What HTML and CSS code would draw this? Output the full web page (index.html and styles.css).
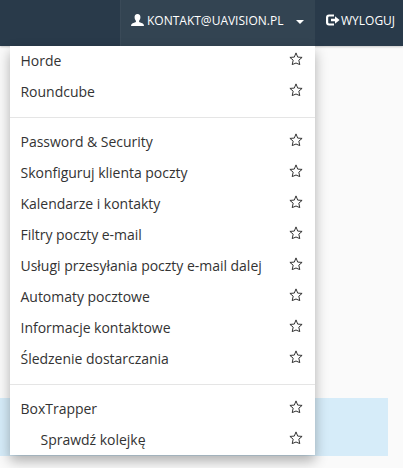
FILE: index.html
```html
<!DOCTYPE html>
<html lang="pl">
<head>
    <meta charset="UTF-8">
    <meta name="viewport" content="width=device-width, initial-scale=1.0">
    <title>Webmail</title>
    <link rel="stylesheet" href="styles.css">
</head>
<body>
    <svg class="hidden">
        <symbol id="star" viewBox="0 0 14 14">
            <path d="M7 0.9L8.7 5.1L13.1 5.4L9.8 8.2L10.8 12.6L7 11L3.2 12.6L4.2 8.2L0.9 5.4L5.3 5.1Z" fill="none" stroke="currentColor" stroke-width="1"/>
        </symbol>
    </svg>

    <header class="navbar">
        <a class="user">
            <svg class="user-icon" viewBox="0 0 13 12"><path d="M6.5 0C8.5 0 9.6 1.4 9.4 3.5C9.3 5.2 8.6 6.2 8.1 6.8V8L11.8 9.6Q13 10.2 13 12H0Q0 10.2 1.2 9.6L4.9 8V6.8C4.4 6.2 3.7 5.2 3.6 3.5C3.4 1.4 4.5 0 6.5 0Z"/></svg>
            <span class="user-name">KONTAKT@UAVISION.PL</span>
            <span class="caret"></span>
        </a>
        <a class="logout">
            <svg class="logout-icon" viewBox="0 0 14 12"><path d="M8 0.5V2.5H3.2Q2.2 2.5 2.2 3.5V8.5Q2.2 9.5 3.2 9.5H8V11.5H3Q0 11.5 0 8.5V3.5Q0 0.5 3 0.5Z"/><path d="M9 2.2L13.6 6L9 9.8V7.3H5V4.7H9Z"/></svg>
            <span class="logout-text">WYLOGUJ</span>
        </a>
    </header>

    <main class="content">
        <div class="notice"></div>
        <ul class="menu">
            <li><a>Horde</a><svg class="star"><use href="#star"/></svg></li>
            <li><a>Roundcube</a><svg class="star"><use href="#star"/></svg></li>
            <li class="divider"></li>
            <li><a>Password &amp; Security</a><svg class="star"><use href="#star"/></svg></li>
            <li><a>Skonfiguruj klienta poczty</a><svg class="star"><use href="#star"/></svg></li>
            <li><a>Kalendarze i kontakty</a><svg class="star"><use href="#star"/></svg></li>
            <li><a>Filtry poczty e-mail</a><svg class="star"><use href="#star"/></svg></li>
            <li><a>Usługi przesyłania poczty e-mail dalej</a><svg class="star"><use href="#star"/></svg></li>
            <li><a>Automaty pocztowe</a><svg class="star"><use href="#star"/></svg></li>
            <li><a>Informacje kontaktowe</a><svg class="star"><use href="#star"/></svg></li>
            <li><a>Śledzenie dostarczania</a><svg class="star"><use href="#star"/></svg></li>
            <li class="divider"></li>
            <li><a>BoxTrapper</a><svg class="star"><use href="#star"/></svg></li>
            <li class="sub"><a>Sprawdź kolejkę</a><svg class="star"><use href="#star"/></svg></li>
        </ul>
    </main>
</body>
</html>
```

FILE: styles.css
```css
* {
    box-sizing: border-box;
}
body {
    margin: 0;
    height: 468px;
    overflow: hidden;
    background: #fafafa;
    color: #333;
    font-family: "Open Sans", sans-serif;
    font-size: 14px;
}
.hidden {
    display: none;
}
.navbar {
    display: flex;
    justify-content: flex-end;
    height: 46px;
    background: #293a4a;
    color: #fff;
    font-size: 12px;
    line-height: 42px;
    box-shadow: 0 1px 2px rgba(0, 0, 0, 0.2);
}
.navbar svg {
    fill: #fff;
}
.user {
    display: flex;
    width: 195px;
    padding-left: 10px;
    background: #334452;
    border-left: 1px solid #3a4a58;
}
.user-icon {
    width: 13px;
    height: 12px;
    margin: 14px 3px 0 0;
}
.caret {
    width: 0;
    height: 0;
    margin: 20px 0 0 13px;
    border-top: 4px solid #fff;
    border-left: 4px solid transparent;
    border-right: 4px solid transparent;
}
.logout {
    display: flex;
    width: 88px;
    padding-left: 11px;
}
.logout-icon {
    width: 14px;
    height: 12px;
    margin: 14px 1px 0 0;
}
.content {
    position: relative;
    height: 422px;
    padding-top: 352px;
}
.notice {
    width: 388px;
    height: 58px;
    background: #d6ecf9;
}
.menu {
    position: absolute;
    top: 0;
    left: 10px;
    width: 305px;
    height: 409px;
    margin: 0;
    padding: 0;
    list-style: none;
    background: #fff;
    box-shadow: 0 6px 12px rgba(0, 0, 0, 0.3);
}
.menu li {
    display: flex;
    justify-content: space-between;
    height: 31px;
    padding: 0 12px 0 10.5px;
    line-height: 30px;
    letter-spacing: -0.02px;
}
.menu li.sub {
    padding-left: 30.5px;
}
.menu li.divider {
    height: 1px;
    margin: 9px 0;
    background: #e5e5e5;
}
.star {
    width: 14px;
    height: 14px;
    margin-top: 6px;
}
```
